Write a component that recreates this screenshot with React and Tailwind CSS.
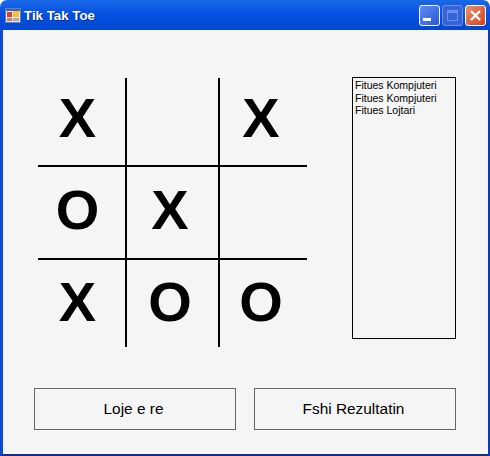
const cells = ['X', '', 'X', 'O', 'X', '', 'X', 'O', 'O'];
const cellStyles = [
  'border-r-2 border-b-2 pr-[8px] pb-[7px]',
  'border-r-2 border-b-2',
  'border-b-2 pr-[5px] pb-[7px]',
  'border-r-2 border-b-2 pr-[8px] pb-[6px]',
  'border-r-2 border-b-2 pr-[5px] pb-[6px]',
  'border-b-2',
  'border-r-2 pr-[8px] pb-[3px]',
  'border-r-2 pr-[5px] pb-[3px]',
  'pr-[5px] pb-[3px]',
];
const results = ['Fitues Kompjuteri', 'Fitues Kompjuteri', 'Fitues Lojtari'];

function AppIcon() {
  return (
    <svg width="16" height="16" viewBox="0 0 16 16" className="shrink-0 mt-[2px]">
      <rect x="0.5" y="0.5" width="15" height="14" fill="#dfe6f2" stroke="#6a7fa8" />
      <rect x="1" y="1" width="14" height="2" fill="#3a62b8" />
      <rect x="2" y="4" width="5" height="5" fill="#d8402a" />
      <rect x="8" y="3" width="6" height="6" fill="#f2c230" />
      <rect x="2" y="10" width="5" height="3" fill="#c9806a" />
      <rect x="8" y="10" width="6" height="3" fill="#b8a8a0" />
    </svg>
  );
}

function TitleButton({ className, children }) {
  return (
    <div className={`w-[21px] h-[21px] rounded-[3px] border flex items-center justify-center ${className}`}>
      {children}
    </div>
  );
}

export default function App() {
  return (
    <div className="w-[490px] h-[456px] flex flex-col bg-white font-['Liberation_Sans',Arial,sans-serif] overflow-hidden">
      <div className="h-[30px] shrink-0 flex items-center pl-[5px] pr-[4px] rounded-t-[7px] bg-gradient-to-b from-[#1a68e8] via-[#0350e0] to-[#0347d0]">
        <AppIcon />
        <span className="ml-[3px] mt-[2px] text-[13.3px] font-bold text-white [text-shadow:1px_1px_0_#0a2f90]">Tik Tak Toe</span>
        <div className="ml-auto flex gap-[2px]">
          <TitleButton className="border-white bg-gradient-to-br from-[#5f8cf0] to-[#2a56d8]">
            <div className="w-[8px] h-[3px] bg-white mt-[9px] mr-[5px]" />
          </TitleButton>
          <TitleButton className="border-[#6a90e8] bg-[#3464d8]">
            <div className="w-[11px] h-[11px] border border-[#6a90e8] border-t-[3px]" />
          </TitleButton>
          <TitleButton className="border-white bg-gradient-to-br from-[#e8906c] to-[#d0401c]">
            <svg width="13" height="13" viewBox="0 0 13 13">
              <path d="M2 2 L11 11 M11 2 L2 11" stroke="#fff" strokeWidth="2.4" />
            </svg>
          </TitleButton>
        </div>
      </div>
      <div className="flex-1 flex flex-col border-l-[3px] border-r-[2px] border-b-[2px] border-l-[#0a4ad8] border-r-[#0a3cb0] border-b-[#0a3090] bg-[#f5f5f5]">
        <div className="flex items-start pt-[47px] pl-[35px]">
          <div className="mt-px grid grid-cols-[89px_93px_87px] grid-rows-[89px_93px_87px]">
            {cells.map((c, i) => (
              <div key={i} className={`flex items-center justify-center border-black text-[56px] font-bold leading-none text-black ${cellStyles[i]}`}>
                {c}
              </div>
            ))}
          </div>
          <div className="ml-[45px] w-[104px] h-[262px] border border-black px-[2px] pt-[1px] text-[10.5px] leading-[12.5px] text-black">
            {results.map((r, i) => (
              <div key={i}>{r}</div>
            ))}
          </div>
        </div>
        <div className="mt-[41px] ml-[31px] flex gap-[18px]">
          <button className="w-[202px] h-[42px] pr-[3px] border border-[#666] text-[15.4px] text-black">Loje e re</button>
          <button className="w-[202px] h-[42px] pr-[3px] border border-[#666] text-[15.4px] text-black">Fshi Rezultatin</button>
        </div>
      </div>
    </div>
  );
}
